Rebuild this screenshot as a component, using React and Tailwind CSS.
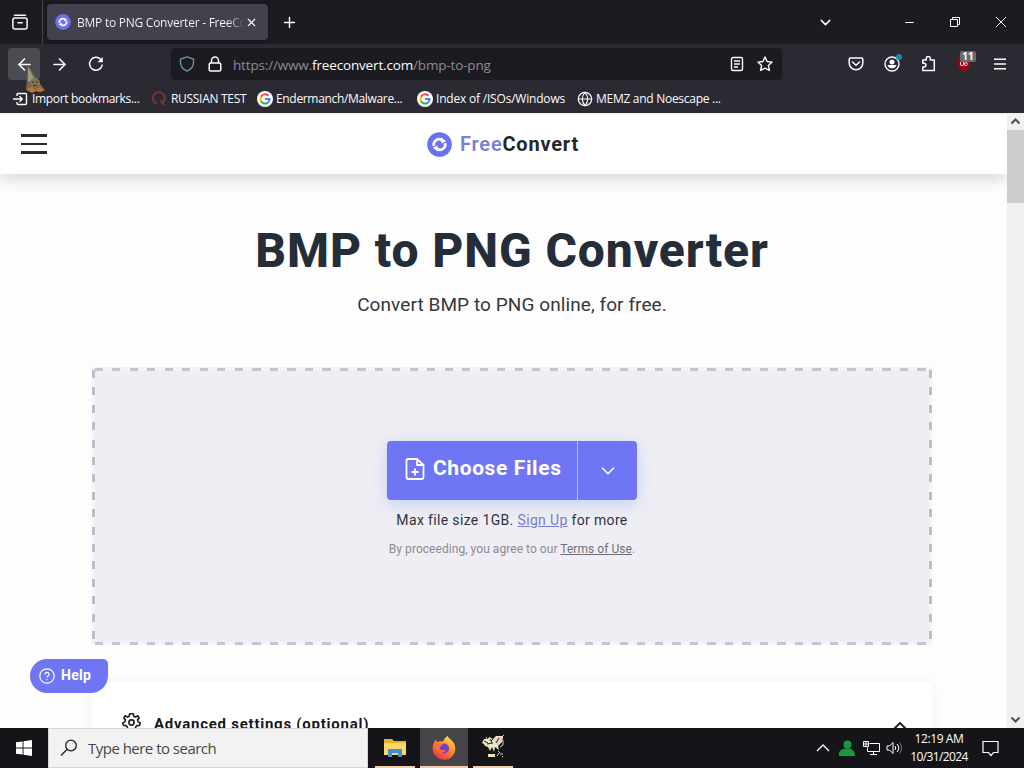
import React from 'react';
import { ChevronDown, Minus, Plus, X, ArrowLeft, ArrowRight, Globe } from 'lucide-react';

const bookmarks = [
  { label: 'Import bookmarks...', icon: 'import', box: 'w-[138px]', text: 'tracking-[-0.32px]' },
  { label: 'RUSSIAN TEST', icon: 'quora', box: 'w-[106px]', text: 'tracking-[-0.3px] pl-px' },
  { label: 'Endermanch/Malware...', icon: 'google', box: 'w-[160px]', text: 'tracking-[-0.33px]' },
  { label: 'Index of /ISOs/Windows', icon: 'google', box: 'w-[160px]', text: 'tracking-[-0.2px]' },
  { label: 'MEMZ and Noescape ...', icon: 'globe', box: 'w-[150px]', text: 'tracking-[-0.28px]' },
];

const GoogleIcon = () => (
  <svg viewBox="0 0 16 16" className="size-4 shrink-0" fill="none" strokeWidth="2">
    <circle cx="8" cy="8" r="8" fill="#fff" />
    <path d="M11.3 4.7A4.6 4.6 0 0 0 4 5.7" stroke="#ea4335" />
    <path d="M4 5.7a4.6 4.6 0 0 0 0 4.6" stroke="#fbbc05" />
    <path d="M4 10.3a4.6 4.6 0 0 0 7 1.1" stroke="#34a853" />
    <path d="M11 11.4A4.6 4.6 0 0 0 12.6 8H8" stroke="#4285f4" />
  </svg>
);

const BookmarkIcon = ({ name }) => {
  if (name === 'google') return <GoogleIcon />;
  if (name === 'globe') return <Globe className="size-4 shrink-0" strokeWidth={1.8} />;
  if (name === 'quora') {
    return (
      <svg viewBox="0 0 16 16" className="size-4 shrink-0" fill="none" stroke="#6d3936" strokeWidth="2">
        <path d="M6 13A6 6 0 1 1 12 11.5M9 9.5c2 .3 2.500 4.500 5.500 4.500" />
      </svg>
    );
  }
  return (
    <svg viewBox="0 0 16 16" className="size-4 shrink-0" fill="none" stroke="#fbfbfe" strokeWidth="1.4">
      <path d="M4 5V3.500Q4 2.500 5 2.500h7.500q1 0 1 1v9q0 1-1 1H5q-1 0-1-1V11M0 8h9M6.500 5.300 9.200 8 6.500 10.700" />
    </svg>
  );
};

const LogoIcon = ({ className }) => (
  <svg viewBox="0 0 26 26" className={className}>
    <circle cx="13" cy="13" r="12.800" fill="#6c71ee" />
    <g fill="none" stroke="#fff" strokeWidth="2.800">
      <path d="M7.300 14.500A5.300 5.300 0 0 1 15 8.300" />
      <path d="M18.700 11.500A5.300 5.300 0 0 1 11 17.700" />
    </g>
    <path d="M14.500 5.500 20 9.500 15 12zM11.500 20.500 6 16.500 11 14z" fill="#fff" />
  </svg>
);

const TabBar = () => (
  <div className="flex h-11 shrink-0 items-center bg-[#1c1b22]">
    <svg viewBox="0 0 16 16" className="ml-3 size-4" fill="none" stroke="#fbfbfe" strokeWidth="1.500">
      <path d="M2.500 1.200h11M6 8.800h4.200" strokeLinecap="round" />
      <rect x="0.900" y="4" width="14.200" height="11" rx="2" />
    </svg>
    <div className="ml-[14px] h-full w-px bg-[#47464f]" />
    <div className="ml-1 flex h-9 w-[221px] items-center rounded bg-[#42414d] pl-2 shadow-[0_0_3px_#00000080]">
      <LogoIcon className="size-4 shrink-0" />
      <span className="ml-[6px] w-[168px] overflow-hidden bg-linear-to-r from-[#fbfbfe] from-90% to-[#42414d] bg-clip-text pt-px text-[12px] tracking-[-0.25px] whitespace-nowrap text-transparent">
        BMP to PNG Converter - FreeCo
      </span>
      <X className="size-[13px] shrink-0" strokeWidth={2} />
    </div>
    <Plus className="mt-px ml-[13px] size-[17px]" strokeWidth={2} />
    <ChevronDown className="ml-[519px] size-[17px]" strokeWidth={2} />
    <Minus className="ml-[69px] size-[13px]" strokeWidth={2} />
    <svg viewBox="0 0 12 12" className="ml-[33px] size-3" fill="none" stroke="#fbfbfe">
      <path d="M1.500 3.500h7v7h-7zM3.500 3.500v-2h7v7h-2" />
    </svg>
    <svg viewBox="0 0 12 12" className="ml-[34px] size-3" stroke="#fbfbfe">
      <path d="m1 1 10 10M11 1 1 11" />
    </svg>
  </div>
);

const Toolbar = () => (
  <div className="flex h-10 shrink-0 items-center">
    <div className="ml-2 flex size-8 items-center justify-center rounded bg-[#4b4b52]">
      <ArrowLeft className="size-[19px]" strokeWidth={2} />
    </div>
    <ArrowRight className="ml-[10px] size-[19px]" strokeWidth={2} />
    <svg viewBox="0 0 16 16" className="ml-[19px] size-4" fill="none" stroke="#fbfbfe" strokeWidth="1.500">
      <path d="M12.800 3.600A6.400 6.400 0 1 0 14.300 8.500" />
      <path d="M14.800 1v5.300H9.500z" fill="#fbfbfe" stroke="none" />
    </svg>

    <div className="ml-[67px] flex h-8 w-[611px] items-center rounded-sm bg-[#1c1b22]">
      <svg viewBox="0 0 16 16" className="ml-2 size-4" fill="none" stroke="#5f99a2" strokeWidth="1.400">
        <path d="M8 .9 14.500 3v3.500c0 4-2.500 7-6.500 8.700C4 13.500 1.500 10.500 1.500 6.500V3z" />
      </svg>
      <svg viewBox="0 0 16 16" className="ml-3 size-4" fill="none" stroke="#fbfbfe" strokeWidth="1.500">
        <rect x="2.200" y="7" width="11.600" height="8" rx="1.500" />
        <path d="M4.500 7V4.500a3.500 3.500 0 0 1 7 0V7" />
      </svg>
      <span className="ml-[10px] w-[496px] pt-[2px] text-[13.500px] tracking-[-0.16px] whitespace-nowrap text-[#8c8b94]">
        https://www.<span className="text-[#fbfbfe]">freeconvert.com</span>/bmp-to-png
      </span>
      <svg viewBox="0 0 16 16" className="size-4" fill="none" stroke="#fbfbfe" strokeWidth="1.400">
        <rect x="2.500" y="1.500" width="11" height="13" rx="1.500" />
        <path d="M5 5h6M5 8h6M5 11h4" />
      </svg>
      <svg viewBox="0 0 16 16" className="ml-3 size-4" fill="none" stroke="#fbfbfe" strokeWidth="1.400" strokeLinejoin="round">
        <path d="m8 1 2.100 4.500 5 .6-3.700 3.400 1 5L8 12.100 3.600 14.500l1-5L.9 6.100l5-.6z" />
      </svg>
    </div>

    <svg viewBox="0 0 16 16" className="ml-[66px] size-4" fill="none" stroke="#fbfbfe" strokeWidth="1.500">
      <path d="M2.500 2h11q1.300 0 1.300 1.300V7A6.800 6.800 0 0 1 1.200 7V3.300Q1.200 2 2.500 2z" />
      <path d="M4.500 6 8 9.200 11.500 6" strokeLinecap="round" />
    </svg>
    <div className="relative ml-[20px] size-4">
      <svg viewBox="0 0 16 16" className="size-4">
        <circle cx="8" cy="8" r="7" fill="none" stroke="#fbfbfe" strokeWidth="1.400" />
        <circle cx="8" cy="6" r="2.500" fill="#fbfbfe" />
        <path d="M3.500 9h9a4.700 4.700 0 0 1-9 0z" fill="#fbfbfe" />
      </svg>
      <span className="absolute -top-[2px] -right-[2px] size-[6px] rounded-full bg-[#0a90b5]" />
    </div>
    <svg viewBox="0 0 16 16" className="ml-[20px] size-4" fill="none" stroke="#fbfbfe" strokeWidth="1.500" strokeLinejoin="round">
      <path d="M5.500 4.500V3a2 2 0 0 1 4 0v1.500h4V15H2v-3.500h1.200a1.900 1.900 0 0 0 0-3.800H2V4.500z" transform="translate(.8 -.5)" />
    </svg>
    <div className="relative ml-[20px] size-4">
      <svg viewBox="0 0 16 16" className="size-4">
        <path d="M8 0l6 2v6c0 3.500-2.500 6-6 8-3.500-2-6-4.500-6-8V2z" fill="#980613" />
        <path d="M4.500 6v3q1.500 1.500 3 0V6M8 9q3 1.500 3.500-.8T8.500 7z" fill="none" stroke="#e6cdd0" />
      </svg>
      <span className="absolute -top-[5px] -right-[4px] flex h-[11px] w-4 items-center justify-center rounded-[2px] bg-[#6b6b6b] text-[10px] font-bold">
        11
      </span>
    </div>
    <svg viewBox="0 0 16 16" className="ml-[20px] size-4" stroke="#fbfbfe" strokeWidth="1.500">
      <path d="M2 3.200h12M2 8h12M2 12.800h12" />
    </svg>
  </div>
);

const BookmarksBar = () => (
  <div className="flex h-[29px] shrink-0 items-center pl-[13px] text-[12px]">
    {bookmarks.map(({ label, icon, box, text }) => (
      <div key={label} className={`flex shrink-0 items-center gap-[3px] whitespace-nowrap ${box}`}>
        <BookmarkIcon name={icon} />
        <span className={text}>{label}</span>
      </div>
    ))}
  </div>
);

// Party hat mouse pointer
const Pointer = () => (
  <svg viewBox="0 0 22 30" className="absolute top-[65px] left-[25px] h-[30px] w-[22px]">
    <path d="M3 1 19 24q-3 4-8 2-5 3-10-1z" fill="#746544" />
    <path d="M3 1 9 14 3 17z" fill="#a09b7c" />
    <circle cx="10" cy="18" r="5" fill="#857453" />
    <path d="M7 17h2M11 17h2M8 20q2 2 4 0" stroke="#352c25" fill="none" />
    <path d="m1 24 6-2 3 3 5-3 5 3-4 2-5-1-4 2z" fill="#ba7431" />
  </svg>
);

const DropZone = () => (
  <div className="relative flex h-[278px] w-[840px] flex-col items-center rounded bg-[#efeef4] pt-[74px]">
    <div className="absolute inset-x-[3px] top-px h-[3px] bg-[repeating-linear-gradient(90deg,#c6c4cf_0_8px,#f4f3f8_8px_17.500px)]" />
    <div className="absolute inset-x-[3px] bottom-0 h-[3px] bg-[repeating-linear-gradient(90deg,#c6c4cf_0_8px,#f4f3f8_8px_17.500px)]" />
    <div className="absolute inset-y-[3px] left-0 w-[3px] bg-[repeating-linear-gradient(180deg,#bfbdc9_0_8px,#f4f3f8_8px_17.400px)]" />
    <div className="absolute inset-y-[3px] right-0 w-[3px] bg-[repeating-linear-gradient(180deg,#bfbdc9_0_8px,#f4f3f8_8px_17.400px)]" />

    <div className="flex h-[59px] w-[250px] rounded bg-[#6e76f4] text-white shadow-[0_4px_16px_#a9c4f5b3]">
      <button className="flex w-[190px] items-center pb-[3px] pl-[17px]">
        <svg viewBox="0 0 22 24" className="h-6 w-[22px]" fill="none" stroke="currentColor" strokeWidth="1.800" strokeLinejoin="round">
          <path d="M13 2H4Q2.500 2 2.500 3.500v17Q2.500 22 4 22h14q1.500 0 1.500-1.500V8zM13 2v6h6.500M11 11.500v7M7.500 15h7" />
        </svg>
        <span className="ml-[7px] text-[21px] font-bold tracking-[0.6px] whitespace-nowrap">Choose Files</span>
      </button>
      <button className="flex w-[60px] items-center justify-center border-l border-[#b5baff]">
        <ChevronDown className="size-[22px]" strokeWidth={1.8} />
      </button>
    </div>

    <p className="mt-[10px] text-[14px] leading-5 tracking-[0.35px] whitespace-nowrap text-[#2f3142]">
      Max file size 1GB. <a className="text-[#797ccb] underline">Sign Up</a> for more
    </p>
    <p className="mt-[11px] text-[12px] leading-4 tracking-[0.05px] whitespace-nowrap text-[#8c8c92]">
      By proceeding, you agree to our <a className="text-[#707078] underline">Terms of Use</a>.
    </p>
  </div>
);

const Page = () => (
  <div className="flex h-[615px] shrink-0 overflow-hidden border-t border-[#ededf0] bg-[#fdfdfd] font-[Roboto,sans-serif] text-[#252d38]">
    <div className="relative flex w-[1007px] flex-col">
      <header className="grid h-[60px] shrink-0 grid-cols-[427px_1fr] items-center bg-white shadow-[0_6px_14px_#00000024]">
        <div className="ml-[21px] flex w-[26px] flex-col gap-[6px]">
          <div className="h-[3px] bg-[#292a2e]" />
          <div className="h-[2px] bg-[#292a2e]" />
          <div className="h-[3px] bg-[#292a2e]" />
        </div>
        <div className="flex items-center">
          <LogoIcon className="size-[25px]" />
          <span className="ml-[8px] text-[20px] font-bold tracking-[0.8px] text-[#26272b]">
            <span className="font-semibold text-[#7b7fd4]">Free</span>Convert
          </span>
        </div>
      </header>

      <main className="flex w-[1024px] flex-col items-center">
        <h1 className="mt-[49px] text-[48px] leading-[56px] font-extrabold tracking-[0.9px] whitespace-nowrap">BMP to PNG Converter</h1>
        <p className="mt-[12px] text-[19px] leading-7 tracking-[0.08px] whitespace-nowrap text-[#35373c]">
          Convert BMP to PNG online, for free.
        </p>
        <div className="mt-[48px]">
          <DropZone />
        </div>
        <div className="mt-[37px] flex h-[90px] w-[840px] items-start rounded bg-white pt-[32px] pl-[29px] shadow-[0_0_14px_#0000000a]">
          <svg viewBox="0 0 24 24" className="-mt-[2px] size-[21px]" fill="none" stroke="#222" strokeWidth="1.900" strokeLinejoin="round">
            <path d="m10 2-.7 3-2 .8L4.600 4.300 3.300 7l1.800 2-.6 2L2 12.500l.8 2.800 3 .2 1.500 1.700-.3 3L9.500 21.500l2.500-2 2.500 2 2.500-1.300-.3-3 1.500-1.700 3-.2.800-2.800-2.500-1.500-.6-2 1.800-2-1.300-2.700-2.700 1.500-2-.8-.7-3z" />
            <circle cx="12" cy="12" r="3" />
          </svg>
          <span className="ml-[12px] text-[15px] leading-5 font-bold tracking-[0.75px] text-[#17181b]">Advanced settings (optional)</span>
          <svg viewBox="0 0 14 8" className="mt-[8px] mr-[25px] ml-auto h-2 w-[14px]" fill="none" stroke="#222" strokeWidth="2">
            <path d="m1 7 6-6 6 6" />
          </svg>
        </div>
      </main>

      <button className="absolute top-[545px] left-[30px] flex h-[34px] w-[78px] items-center rounded-[17px] rounded-tr-[5px] bg-[#6e76f4] pl-[9px] text-[14px] font-bold text-white">
        <svg viewBox="0 0 16 16" className="size-4 shrink-0" fill="none" stroke="currentColor" strokeWidth="1.200">
          <circle cx="8" cy="8" r="7.200" />
          <path d="M6 6.500a2 2 0 1 1 2.600 1.800Q8 8.500 8 9.500M8 11v1.200" />
        </svg>
        <span className="ml-[6px] pb-[2px] tracking-[0.3px]">Help</span>
      </button>
    </div>

    <div className="relative z-10 flex w-[17px] flex-col items-center bg-[#f0f0f0]">
      <svg viewBox="0 0 17 16" className="h-4 w-[17px]" fill="none" stroke="#505050" strokeWidth="2">
        <path d="m4.500 9.500 4-4 4 4" />
      </svg>
      <div className="h-[73px] w-full bg-[#cdcdcd]" />
      <svg viewBox="0 0 17 16" className="mt-auto h-4 w-[17px]" fill="none" stroke="#505050" strokeWidth="2">
        <path d="m4.500 5.500 4 4 4-4" />
      </svg>
    </div>
  </div>
);

const FirefoxIcon = () => (
  <svg viewBox="0 0 24 24" className="size-6">
    <defs>
      <linearGradient id="flame" x1="0.800" y1="0" x2="0.200" y2="1">
        <stop offset="0" stopColor="#ffe14a" />
        <stop offset="0.450" stopColor="#ff8b28" />
        <stop offset="1" stopColor="#ee2455" />
      </linearGradient>
    </defs>
    <path d="M15.500 0c1 3 7.500 5 7.800 12A11.300 11.300 0 0 1 .7 13C.5 9 2 6 4 3.500c.2 1.500.5 2 1.200 2.700C7 5.300 9 5 11 5.500 12 3 13.500 1 15.500 0z" fill="url(#flame)" />
    <circle cx="12" cy="12.500" r="5" fill="#7340c8" />
    <path d="M4 8c3-1 6-.5 7 1.500-2 .3-3 1-3.500 2 .5 3 4 3.500 6.500 2-1 4-8 4.500-10 0z" fill="#ff6c32" />
  </svg>
);

const Taskbar = () => (
  <div className="flex h-10 shrink-0 items-center bg-[#141419] font-['Open_Sans',sans-serif]">
    <div className="flex h-full w-12 items-center justify-center">
      <svg viewBox="0 0 16 16" className="size-4" fill="#fff">
        <path d="M0 2.300 6.600 1.400v6.100H0zM7.500 1.200 16 0v7.500H7.500zM0 8.400h6.600v6.200L0 13.700zM7.500 8.400H16V16l-8.500-1.200z" />
      </svg>
    </div>
    <div className="flex h-full w-[320px] items-center border border-[#d4d4d4] bg-[#f2f2f2] pl-[11px]">
      <svg viewBox="0 0 18 18" className="size-[18px]" fill="none" stroke="#222" strokeWidth="1.300">
        <circle cx="11" cy="6.500" r="5.300" />
        <path d="M7.200 10.300 1 16.500" />
      </svg>
      <span className="ml-[10px] text-[15px] tracking-[-0.52px] whitespace-nowrap text-[#474747]">Type here to search</span>
    </div>
    <div className="ml-[7px] flex h-full w-10 flex-col items-center justify-end border-b-2 border-[#f2cfad]">
      <svg viewBox="0 0 22 20" className="mb-[8px] h-5 w-[22px]">
        <path d="M0 1h8l2 2h12v14H0z" fill="#e8b32d" />
        <path d="M0 5h22v12H0z" fill="#fbd764" />
        <path d="M4 11h14v8h-4v-4H8v4H4z" fill="#4390cf" />
      </svg>
    </div>
    <div className="ml-[5px] flex h-full w-12 flex-col items-center justify-end border-b-2 border-[#f5c9a7] bg-[#46464a]">
      <div className="mb-[6px]"><FirefoxIcon /></div>
    </div>
    <div className="ml-[5px] flex h-full w-10 flex-col items-center justify-end border-b-2 border-[#f2cfad]">
      <svg viewBox="0 0 24 24" className="mb-[7px] size-6">
        <path d="M1 8l2-4h4l1-2 4 2 3-3h7l-1 6-4 4 1 4-4-3-1 5-2-5-2 4-2-4-3-1-1-2z" fill="#e9e8c6" />
        <path d="M12 6l4-4 6 0-1 4-4 4z" fill="#eccdd0" />
        <path d="M3 6l4 2M9 4l2 4M6 9l6-1M18 3l-3 5M12 4l-2 2" stroke="#25251c" fill="none" />
        <path d="M22 1l1-1M22 5v5l-3 2M5 2l1 2" stroke="#d5d5c0" fill="none" />
        <path d="M7 19h7v3H7z" fill="#e8e6aa" />
        <path d="M17 16l2 2M19 19h3M16 21l2-3M21 21l1 1" stroke="#d5d5c0" />
      </svg>
    </div>

    <svg viewBox="0 0 14 8" className="ml-[303px] h-2 w-[14px]" fill="none" stroke="#fff" strokeWidth="1.300">
      <path d="m1 7 6-6 6 6" />
    </svg>
    <svg viewBox="0 0 16 16" className="ml-[9px] size-4" fill="#18983a">
      <circle cx="8.500" cy="4.500" r="4" />
      <path d="M0 16v-3q1-4 6-4.500h5Q16 10 16 16z" />
    </svg>
    <svg viewBox="0 0 17 15" className="ml-2 h-[15px] w-[17px]" fill="none" stroke="#fff">
      <path d="M6.500 2.500h10v8h-12v-4M.5.500h5v5h-5zM3 .5v5M.5 3h5M10.500 10.500v3M7 13.500h7" />
    </svg>
    <svg viewBox="0 0 17 14" className="ml-[6px] h-[14px] w-[17px]" fill="none" stroke="#fff">
      <path d="M1 5v4h2.500L7 12.500v-11L3.500 5zM9 5q1.500 2 0 4M11 3q3.500 4 0 8" />
      <path d="M13.500 1.500q4 5.500 0 11" stroke="#777" />
    </svg>
    <div className="ml-[3px] flex w-[66px] flex-col items-center text-[12px] leading-[18px] whitespace-nowrap text-white">
      <span className="tracking-[-0.4px]">12:19 AM</span>
      <span className="tracking-[-0.6px]">10/31/2024</span>
    </div>
    <svg viewBox="0 0 17 17" className="ml-[10px] size-[17px]" fill="none" stroke="#fff" strokeWidth="1.200">
      <path d="M1 1.500h15v11h-4.500L9 15.500l-2.500-3H1z" />
    </svg>
  </div>
);

const App = () => {
  return (
    <div className="relative flex h-[768px] w-[1024px] flex-col overflow-hidden bg-[#2b2a33] font-['Open_Sans',sans-serif] text-[#fbfbfe]">
      <TabBar />
      <Toolbar />
      <BookmarksBar />
      <Page />
      <Taskbar />
      <Pointer />
    </div>
  );
};

export default App;
